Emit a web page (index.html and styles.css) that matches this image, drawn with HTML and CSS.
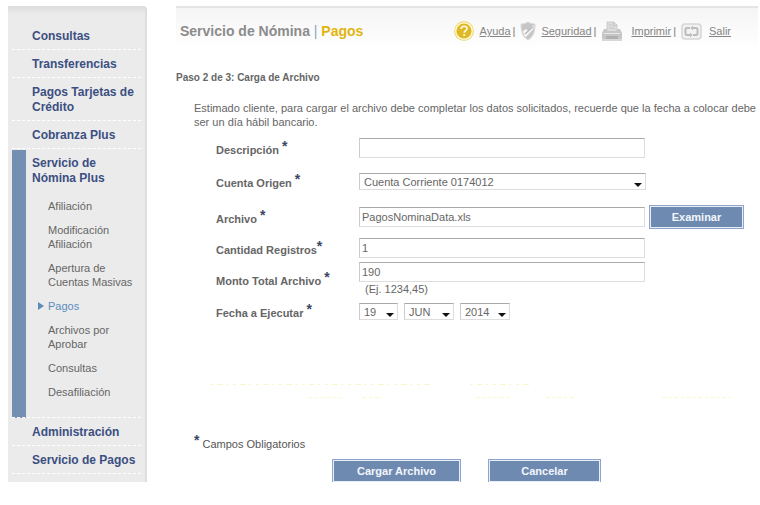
FILE: index.html
```html
<!DOCTYPE html>
<html lang="es">
<head>
<meta charset="utf-8">
<title>Servicio de Nómina | Pagos</title>
<link rel="stylesheet" href="styles.css">
</head>
<body>
<nav class="sidebar">
  <ul class="menu">
    <li><a href="#">Consultas</a></li>
    <li><a href="#">Transferencias</a></li>
    <li><a href="#">Pagos Tarjetas de Crédito</a></li>
    <li><a href="#">Cobranza Plus</a></li>
    <li class="open">
      <a href="#">Servicio de<br>Nómina Plus</a>
      <ul class="submenu">
        <li><a href="#">Afiliación</a></li>
        <li><a href="#">Modificación Afiliación</a></li>
        <li><a href="#">Apertura de Cuentas Masivas</a></li>
        <li class="current"><a href="#">Pagos</a></li>
        <li><a href="#">Archivos por Aprobar</a></li>
        <li><a href="#">Consultas</a></li>
        <li><a href="#">Desafiliación</a></li>
      </ul>
    </li>
    <li><a href="#">Administración</a></li>
    <li><a href="#">Servicio de Pagos</a></li>
  </ul>
</nav>
<main class="main">
  <header class="header">
    <h1>Servicio de Nómina <span class="bar">|</span> <span class="section">Pagos</span></h1>
    <div class="tools">
      <svg width="22" height="22" viewBox="0 0 22 22"><circle cx="11" cy="11" r="10" fill="#f0dc7c"/><circle cx="11" cy="11" r="8.8" fill="#fffbe4"/><circle cx="11" cy="11" r="7.6" fill="#dfb925"/><path d="M8.200 9c0-3.600 5.800-3.600 5.800-.4 0 2.200-2.800 2-2.800 4.200" fill="none" stroke="#fffbe0" stroke-width="1.700"/><circle cx="11.200" cy="15" r="1.100" fill="#fffbe0"/></svg>
      <a href="#">Ayuda</a><span>|</span>
      <svg class="shield" width="16" height="20" viewBox="0 0 16 20"><path d="M8 .8C6 2.400 3.500 3 1 3c0 7 1 12.500 7 16 6-3.500 7-9 7-16-2.500 0-5-.6-7-2.200z" fill="#c6c6c6" stroke="#ddd"/><path d="M2.500 10.500 6 8l2 1.500L14 4l-1 4.500-7.500 8z" fill="#f5f5f5"/><path d="m5 13 7.500-7" stroke="#b4b4b4" stroke-width="1.300"/></svg>
      <a href="#">Seguridad</a><span>|</span>
      <svg class="printer" width="22" height="21" viewBox="0 0 22 21"><path d="M6 10V1h7l3 3v6" fill="#dcdcdc" stroke="#ccc"/><path d="M12.500 1v3.500H16M8 4h3M8 7h6" fill="none" stroke="#c4c4c4"/><path d="M3 8h3v2h10V8h3l2 4v6H1v-6z" fill="#c6c6c6"/><path d="M3 12.500h16" stroke="#e8e8e8"/><path d="M5 15h12v3H5z" fill="#b0b0b0"/><path d="M1 19h20" stroke="#d8d8d8" stroke-width="2"/></svg>
      <a href="#">Imprimir</a><span>|</span>
      <svg class="exit" width="21" height="17" viewBox="0 0 21 17"><rect x="1" y="1" width="19" height="15" rx="3" fill="#f2f2f2" stroke="#d6d6d6" stroke-width="1.500"/><path d="M9 5H6Q4.500 5 4.500 6.500v4Q4.500 12 6 12h3M12 5h3q1.500 0 1.500 1.500v4Q16.500 12 15 12h-3" fill="none" stroke="#bcbcbc" stroke-width="2"/><path d="m12 2.500-2.500 2.500 2.500 2.500zM9 9.500 11.500 12 9 14.500z" fill="#bcbcbc"/></svg>
      <a href="#">Salir</a>
    </div>
  </header>
  <h2>Paso 2 de 3: Carga de Archivo</h2>
  <form class="form">
    <p class="intro">Estimado cliente, para cargar el archivo debe completar los datos solicitados, recuerde que la fecha a colocar debe ser un día hábil bancario.</p>
    <div class="fields">
      <div class="row spaced">
        <label for="desc">Descripción <b>*</b></label>
        <input id="desc" type="text">
      </div>
      <div class="row spaced">
        <label for="cuenta">Cuenta Origen <b>*</b></label>
        <span class="pick wide"><select id="cuenta"><option>Cuenta Corriente 0174012</option></select></span>
      </div>
      <div class="row file">
        <label for="archivo">Archivo <b>*</b></label>
        <input id="archivo" type="text" value="PagosNominaData.xls">
        <button class="browse" type="button">Examinar</button>
      </div>
      <div class="row tight">
        <label for="cantidad">Cantidad Registros<b>*</b></label>
        <input id="cantidad" type="text" value="1">
      </div>
      <div class="row">
        <label for="monto">Monto Total Archivo <b>*</b></label>
        <div class="stack">
          <input id="monto" type="text" value="190">
          <small>(Ej. 1234,45)</small>
        </div>
      </div>
      <div class="row">
        <label for="dia">Fecha a Ejecutar <b>*</b></label>
        <div class="date">
          <span class="pick day"><select id="dia"><option>19</option></select></span>
          <span class="pick"><select aria-label="Mes"><option>JUN</option></select></span>
          <span class="pick"><select aria-label="Año"><option>2014</option></select></span>
        </div>
      </div>
    </div>
    <svg class="traces" height="16" width="540" viewBox="0 0 540 16"><path d="M0 1.500h220M260 1.500h62" stroke="#fcf6cc" stroke-dasharray="3 4 6 3 2 5"/><path d="M98 14.500h36M152 14.500h20M265 14.500h36M335 14.500h30M452 14.500h70" stroke="#fcf8d4" stroke-dasharray="5 2 3 2"/></svg>
    <p class="note"><b>*</b> Campos Obligatorios</p>
    <div class="actions">
      <button type="submit" class="send">Cargar Archivo</button>
      <button type="button" class="cancel">Cancelar</button>
    </div>
  </form>
</main>
</body>
</html>
```
FILE: styles.css
```css
* { box-sizing: border-box; }

body {
  display: flex;
  align-items: flex-start;
  gap: 29px;
  margin: 0;
  padding: 6px 2px 0 8px;
  background: #fff;
  color: #666;
  font: 11px/14px "Liberation Sans", Arial, sans-serif;
}

h1, h2, p, ul { margin: 0; padding: 0; }
ul { list-style: none; }

/* Sidebar */
.sidebar {
  flex: 0 0 139px;
  padding: 16px 4px 8px;
  border-right: 2px solid #dedede;
  border-top-right-radius: 4px;
  background: linear-gradient(#dcdcdc, #ebebeb 8px);
}
.menu > li {
  padding: 7px 0 5px 20px;
  border-bottom: 1px dashed #fff;
}
.menu > li > a {
  display: block;
  color: #3c4f82;
  font-size: 12px;
  font-weight: bold;
  line-height: 15px;
  text-decoration: none;
}
.menu > .open {
  padding-bottom: 18px;
  background: linear-gradient(#7390b3, #7390b3) 0 1px / 14px 100% no-repeat;
}
.submenu {
  display: grid;
  gap: 10px;
  padding: 13px 0 0 16px;
}
.submenu a { color: #666; text-decoration: none; }
.submenu .current { position: relative; }
.submenu .current a { color: #5b8dbe; }
.submenu .current::before {
  content: "";
  position: absolute;
  left: -10px;
  top: 3px;
  border: 4px solid transparent;
  border-left: 6px solid #5a8db8;
  border-right: 0;
}

/* Header */
.main { flex: 1; min-width: 0; }
.header {
  display: flex;
  justify-content: space-between;
  align-items: center;
  height: 44px;
  padding: 4px 25px 0 4px;
  border-top: 2px solid #e4e4e4;
  background: linear-gradient(#f5f5f5, #fff);
}
h1 { color: #8c8c8c; font-size: 14px; line-height: 18px; }
.bar { color: #8fa3bf; font-weight: normal; }
.section { color: #e0b50f; }
.tools { display: flex; align-items: center; color: #777; }
.tools a { margin: 0 2px 0 5px; color: #858585; }
.tools .shield { margin: 0 0 0 5px; }
.tools .printer { margin: 0 3px 0 5px; }
.tools .exit { margin: 0 2px 0 5px; }

h2 { margin-top: 21px; font-size: 10px; line-height: 14px; }

/* Form */
.form { padding-left: 18px; }
.intro { margin: 16px 2px 9px 0; text-align: justify; }
.fields { padding-left: 22px; }
.row { display: flex; align-items: center; margin-bottom: 7px; }
.row.spaced { margin-bottom: 15px; }
.row.file { margin-bottom: 9px; }
.row.tight { margin-bottom: 4px; }
label { flex: 0 0 143px; padding-top: 2px; font-weight: bold; }
label b, .note b {
  color: #3c4664;
  font-size: 14px;
  line-height: 8px;
  vertical-align: 3px;
}
input, select {
  width: 100%;
  border: 1px solid #ddd;
  border-top-color: #aaa;
  border-left-color: #ccc;
  border-radius: 0;
  background: #fff;
  color: #666;
  font: inherit;
}
input { width: 286px; height: 20px; padding: 0 2px; }
select { height: 17px; padding: 0 4px; appearance: none; display: block; }
.pick { position: relative; width: 50px; }
.pick.wide { width: 287px; }
.pick.day { width: 39px; }
.pick::after {
  content: "";
  position: absolute;
  right: 4px;
  bottom: 3px;
  border: 4px solid transparent;
  border-top-color: #111;
  border-bottom: 0;
  pointer-events: none;
}
.stack { display: grid; }
small { padding-left: 6px; font-size: 11px; }
.date { display: flex; gap: 6px; }

button {
  height: 24px;
  padding: 0;
  border: 1px solid #8ea4cb;
  border-radius: 0;
  background: #6f8ab0;
  box-shadow: inset 0 0 0 1px #e8eef8;
  color: #f2f6fc;
  font: bold 11px/14px "Liberation Sans", Arial, sans-serif;
}
.browse { width: 95px; margin-left: 4px; }
.traces { display: block; margin: 63px 0 0 16px; }
.note { margin-top: 37px; color: #555; }
.actions { display: flex; gap: 27px; margin: 8px 0 0 138px; }
.actions button { border-bottom: 0; height: 23px; }
.send { width: 129px; }
.cancel { width: 113px; }
```
